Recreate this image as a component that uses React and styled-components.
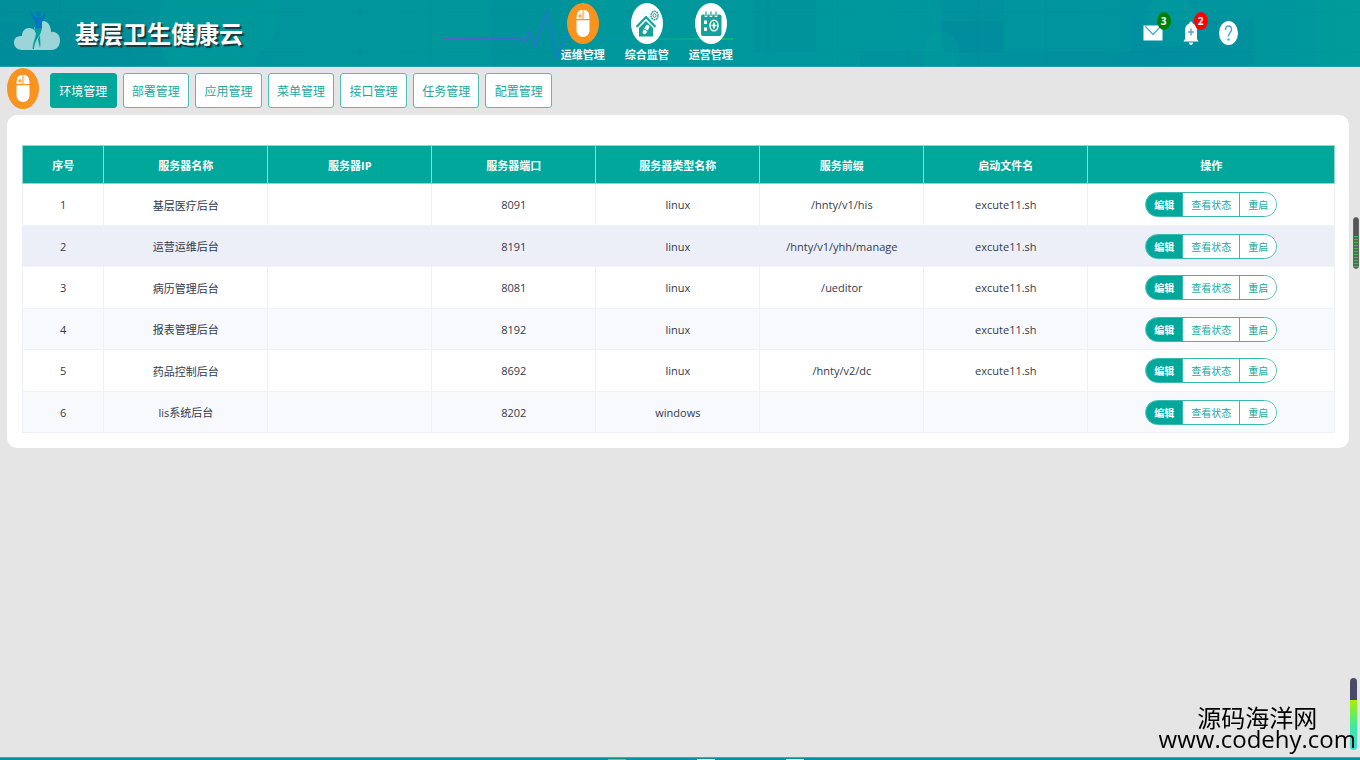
import { useState } from "react";
import styled, { createGlobalStyle } from "styled-components";

const GlobalStyles = createGlobalStyle`
  * {
    box-sizing: border-box;
  }

  body {
    margin: 0;
    background: #e5e5e5;
    color: #333a4d;
    font-family: "Open Sans", "Noto Sans CJK SC", sans-serif;
    font-size: 11px;
  }

  button {
    font-family: inherit;
    cursor: pointer;
  }
`;

const Page = styled.div`
  display: flex;
  flex-direction: column;
  min-height: 100vh;
`;

const Header = styled.header`
  position: relative;
  display: flex;
  height: 67px;
  background: linear-gradient(90deg, #00909b, #00989c 45%, #00979d 65%, #00939f 85%, #00989c);
  border-bottom: 1px solid #1f9fac;
`;

const HeaderPattern = styled.svg`
  position: absolute;
  inset: 0;
  width: 100%;
  height: 100%;
`;

const Brand = styled.div`
  position: relative;
  display: flex;
  gap: 14px;
  width: 40.5%;
  padding: 9px 0 0 13px;
`;

const Title = styled.h1`
  margin: 9px 0 0;
  color: #fff;
  font-size: 24px;
  font-weight: 700;
  line-height: 32px;
  text-shadow: 2px 2px 1px #17393c;
`;

const MainNav = styled.nav`
  position: relative;
  display: flex;
`;

const Pulse = styled.svg`
  position: absolute;
  top: 0;
  left: -107px;
`;

const NavItem = styled.a`
  position: relative;
  display: flex;
  flex-direction: column;
  align-items: center;
  width: 64px;
  padding-top: 3px;
  color: #fff;
  font-weight: 700;
  line-height: 22px;
  text-decoration: none;
`;

const Tools = styled.div`
  position: relative;
  display: flex;
  align-items: center;
  gap: 19px;
  margin-left: auto;
  padding-right: 9%;
`;

const Tool = styled.button`
  position: relative;
  display: flex;
  align-items: center;
  height: 24px;
  padding: 0;
  border: 0;
  background: none;
`;

const Badge = styled.span`
  position: absolute;
  top: -9px;
  right: -8px;
  width: 14px;
  height: 18px;
  border-radius: 50%;
  background: ${(props) => props.$color};
  color: #fff;
  font-size: 10px;
  font-weight: 700;
  line-height: 18px;
  text-align: center;
`;

const SubNav = styled.nav`
  display: flex;
  align-items: flex-start;
  height: 48px;
  padding: 1px 0 0 7px;
`;

const Tabs = styled.div`
  display: grid;
  grid-template-columns: repeat(7, 1fr);
  gap: 6px;
  width: 502px;
  margin: 5px 0 0 11px;
`;

const Tab = styled.button`
  height: 35px;
  padding: 0;
  border: 1px solid ${(props) => (props.$active ? "#00a89b" : "#4dbfb6")};
  border-radius: 3px;
  background: ${(props) => (props.$active ? "#00a89b" : "#fff")};
  color: ${(props) => (props.$active ? "#fff" : "#1ba99e")};
  font-size: 12px;
`;

const Card = styled.main`
  margin: 0 11px 0 7px;
  padding: 30px 14px 15px 15px;
  border-radius: 10px;
  background: #fff;
`;

const Table = styled.table`
  width: 100%;
  border-collapse: collapse;
  table-layout: fixed;
`;

const HeadCell = styled.th`
  width: ${(props) => props.$width};
  height: 38px;
  padding: 0;
  border: 1px solid #8fd8d2;
  background: #00a89b;
  color: #fff;
  font-weight: 700;
`;

const Row = styled.tr`
  height: 42px;
  background: ${(props) => (props.$highlighted ? "#eceff8" : "#fff")};

  &:nth-child(even) {
    height: 41px;
    background: ${(props) => (props.$highlighted ? "#eceff8" : "#f7f9fd")};
  }
`;

const Cell = styled.td`
  padding: 0;
  border: 1px solid #eef1f7;
  text-align: center;
`;

const Actions = styled.div`
  display: inline-flex;
  height: 25px;
  border: 1px solid #3cb9af;
  border-radius: 13px;
  overflow: hidden;
  vertical-align: middle;
`;

const Action = styled.button`
  padding: 0 8px;
  border: 0;
  border-left: ${(props) => (props.$primary ? "0" : "1px solid #3cb9af")};
  background: ${(props) => (props.$primary ? "#00a89b" : "#fff")};
  color: ${(props) => (props.$primary ? "#fff" : "#1ba99e")};
  font-size: 10px;
  font-weight: ${(props) => (props.$primary ? 700 : 400)};
`;

const Footer = styled.footer`
  display: flex;
  justify-content: center;
  gap: 71px;
  height: 3px;
  margin-top: auto;
  padding-left: 52px;
  border-top: 1px solid #3aa9b0;
  background: #00939c;
`;

const FooterDot = styled.span`
  width: 18px;
  height: 2px;
  border-radius: 50% 50% 0 0;
  background: linear-gradient(transparent 1px, ${(props) => props.$color} 1px);
`;

const SideMeter = styled.div`
  position: fixed;
  top: 217px;
  right: 1px;
  width: 6px;
  height: 52px;
  border: 1px solid #666;
  border-radius: 3px;
  background: linear-gradient(#555 18px, transparent 18px),
    repeating-linear-gradient(#35c450 0 1px, #4b704f 1px 3px);
`;

const BottomMeter = styled.div`
  position: fixed;
  right: 3px;
  bottom: 10px;
  width: 7px;
  height: 72px;
  border-radius: 4px;
  background: linear-gradient(#4b4a66 22px, #a8f000 22px, #3fe8a0 48px, #35e0d8);
`;

const Watermark = styled.div`
  position: fixed;
  right: 4px;
  bottom: 11px;
  color: #000;
  font-size: 24px;
  line-height: 21px;
  text-align: center;
`;

const columns = [
  { label: "序号", width: "6.2%" },
  { label: "服务器名称", width: "12.5%" },
  { label: "服务器IP", width: "12.5%" },
  { label: "服务器端口", width: "12.5%" },
  { label: "服务器类型名称", width: "12.5%" },
  { label: "服务前缀", width: "12.5%" },
  { label: "启动文件名", width: "12.5%" },
  { label: "操作", width: "18.8%" },
];

const servers = [
  { name: "基层医疗后台", port: "8091", type: "linux", prefix: "/hnty/v1/his", file: "excute11.sh" },
  { name: "运营运维后台", port: "8191", type: "linux", prefix: "/hnty/v1/yhh/manage", file: "excute11.sh" },
  { name: "病历管理后台", port: "8081", type: "linux", prefix: "/ueditor", file: "excute11.sh" },
  { name: "报表管理后台", port: "8192", type: "linux", prefix: "", file: "excute11.sh" },
  { name: "药品控制后台", port: "8692", type: "linux", prefix: "/hnty/v2/dc", file: "excute11.sh" },
  { name: "lis系统后台", port: "8202", type: "windows", prefix: "", file: "" },
];

const tabs = ["环境管理", "部署管理", "应用管理", "菜单管理", "接口管理", "任务管理", "配置管理"];

function Logo() {
  return (
    <svg width="48" height="42" viewBox="0 0 48 42" aria-hidden="true">
      <path
        d="M10 41C4 41 1 38 1 33.500C1 29 4 27 9 27C9 22 12 19 16 19C19 19 20 20 21 21C22 15 26 12 30 12C35 12 38 17 38 23C43 22 47 26 47 31C47 37 44 41 38 41Z"
        fill="#9bd5da"
      />
      <path d="M21 20L29 18C29 22 27 26 24 30C22 34 21 37 21 40L19.500 40C20 34 22 29 23 25Z" fill="#00a09a" />
      <path d="M27 26C27 32 28 36 27 39C26.500 36 25 33 25 30Z" fill="#00a09a" />
      <ellipse cx="25.500" cy="4.800" rx="2" ry="2.500" fill="#0874c4" />
      <path
        d="M17 0C19 5 22 8.500 25.500 8.500C29 8.500 31 6 33 2C32 8 29.500 11 29 14L29 19L22 20L22.500 13C19 9 17.500 5 17 0Z"
        fill="#0874c4"
      />
    </svg>
  );
}

function MouseIcon() {
  return (
    <svg width="32" height="41" viewBox="0 0 32 41" aria-hidden="true">
      <ellipse cx="16" cy="20.500" rx="16" ry="20.500" fill="#f7931e" />
      <path d="M9.500 16C9.500 10 11 7 15.500 6.700V16Z" fill="#fff" />
      <path d="M16.500 6.700C21 7 22.500 10 22.500 16H16.500Z" fill="#fff" />
      <path d="M9.500 17.300H22.500V27C22.500 31 20 34 16 34C12 34 9.500 31 9.500 27Z" fill="#fff" />
      <path d="M11 13H15M13 10.500V15.500" stroke="#f7931e" strokeWidth="1" />
    </svg>
  );
}

function HouseIcon() {
  return (
    <svg width="32" height="41" viewBox="0 0 32 41" aria-hidden="true">
      <ellipse cx="16" cy="20.500" rx="16" ry="20.500" fill="#fff" />
      <g fill="none" stroke="#12a49a">
        <path d="M5.500 24L15 14L24.500 24" strokeWidth="2.200" />
        <ellipse cx="23.500" cy="12.500" rx="3.500" ry="4.300" strokeWidth="1.300" strokeDasharray="2 0.500" />
        <ellipse cx="23.500" cy="12.500" rx="1.500" ry="2" />
      </g>
      <path d="M8 25L15 18L22 25V33.500H8Z" fill="#12a49a" />
      <rect x="13" y="21.500" width="4" height="10" rx="2" fill="#fff" transform="rotate(28 15 26.500)" />
      <path d="M13 26L17 28" stroke="#12a49a" />
    </svg>
  );
}

function CalendarIcon() {
  return (
    <svg width="32" height="41" viewBox="0 0 32 41" aria-hidden="true">
      <ellipse cx="16" cy="20.500" rx="16" ry="20.500" fill="#fff" />
      <rect x="6" y="11.500" width="20.500" height="21.500" rx="2" fill="#12a49a" />
      <path d="M11 9V14M16 9V14M21 9V14" stroke="#fff" strokeWidth="2.600" />
      <path d="M11 8.500V13M16 8.500V13M21 8.500V13" stroke="#12a49a" strokeWidth="1.200" />
      <path d="M9 17.500H12V21H9ZM9 24.500H12V28H9Z" fill="#fff" />
      <ellipse cx="19" cy="22.500" rx="4" ry="5.300" fill="none" stroke="#fff" strokeWidth="1.500" />
      <path d="M16.500 22.500H21.500M19 19.500V25.500" stroke="#fff" strokeWidth="1.600" />
    </svg>
  );
}

function Pattern() {
  return (
    <HeaderPattern viewBox="0 0 1360 66" preserveAspectRatio="none" aria-hidden="true">
      <g fill="#007aa0" opacity="0.120">
        <rect x="0" y="22" width="160" height="44" />
        <rect x="754" y="0" width="62" height="52" />
        <rect x="942" y="0" width="62" height="21" />
        <rect x="1130" y="20" width="124" height="46" />
        <rect x="490" y="0" width="90" height="66" />
        <rect x="860" y="52" width="270" height="14" />
      </g>
      <rect x="942" y="21" width="62" height="31" fill="#007aa0" opacity="0.300" />
      <g fill="#00a79c" opacity="0.220">
        <path d="M165 0H280C285 28 265 52 245 66H170C156 44 154 18 165 0Z" />
        <ellipse cx="941" cy="54" rx="18" ry="23" />
        <ellipse cx="1170" cy="18" rx="23" ry="29" />
        <rect x="1317" y="0" width="43" height="66" />
      </g>
      <path
        d="M0 12H1360M0 52H1360M60 0V66M130 0V66M360 0V66M430 0V66M768 0V66M838 0V66M908 0V66M978 0V66M1046 0V66"
        stroke="#007f93"
        opacity="0.120"
      />
    </HeaderPattern>
  );
}

function MainMenu() {
  return (
    <MainNav>
      <Pulse width="290" height="66" viewBox="0 0 290 66" aria-hidden="true">
        <defs>
          <linearGradient id="pulse" gradientUnits="userSpaceOnUse" x1="0" y1="0" x2="290" y2="0">
            <stop offset="0" stopColor="#5a5ccb" />
            <stop offset="0.300" stopColor="#2f70d0" />
            <stop offset="0.460" stopColor="#0088d0" />
            <stop offset="0.700" stopColor="#00a590" />
            <stop offset="1" stopColor="#00c862" />
          </linearGradient>
        </defs>
        <path
          d="M0 38.500H77L80 42L85 32L91 46L103 12L113 57L124 32L130 39H289"
          fill="none"
          stroke="url(#pulse)"
          strokeWidth="1.600"
        />
      </Pulse>
      <NavItem href="#ops">
        <MouseIcon />
        运维管理
      </NavItem>
      <NavItem href="#supervise">
        <HouseIcon />
        综合监管
      </NavItem>
      <NavItem href="#business">
        <CalendarIcon />
        运营管理
      </NavItem>
    </MainNav>
  );
}

function HeaderTools() {
  return (
    <Tools>
      <Tool aria-label="消息">
        <svg width="20" height="16" viewBox="0 0 20 16" aria-hidden="true">
          <rect x="0.500" y="0.500" width="19" height="15" fill="#fff" />
          <path d="M2 1L10 9.500L18 1" fill="none" stroke="#4ba9dc" strokeWidth="1.200" />
        </svg>
        <Badge $color="#008000">3</Badge>
      </Tool>
      <Tool aria-label="通知">
        <svg width="18" height="24" viewBox="0 0 18 24" aria-hidden="true">
          <path
            d="M9 0.500C10 0.500 10.500 1.300 10.500 2.300C13.500 3.500 15 6 15 10V18L16.500 20.500H1.500L3 18V10C3 6 4.500 3.500 7.500 2.300C7.500 1.300 8 0.500 9 0.500Z"
            fill="#fff"
          />
          <path d="M7 21.500H11C11 23 10 24 9 24C8 24 7 23 7 21.500Z" fill="#fff" />
          <path d="M6 11H12M9 7.500V14.500" stroke="#4ba9dc" strokeWidth="1.400" />
        </svg>
        <Badge $color="#ff0000">2</Badge>
      </Tool>
      <Tool aria-label="帮助">
        <svg width="19" height="24" viewBox="0 0 19 24" aria-hidden="true">
          <ellipse cx="9.500" cy="12" rx="9.500" ry="12" fill="#fff" />
          <path
            d="M6.500 9C6.500 6.500 7.500 5 9.500 5C11.500 5 12.500 6.500 12.500 8.500C12.500 11.500 9.500 11.500 9.500 15.500"
            fill="none"
            stroke="#4ba9dc"
            strokeWidth="1.500"
          />
          <circle cx="9.500" cy="18.500" r="1.200" fill="#4ba9dc" />
        </svg>
      </Tool>
    </Tools>
  );
}

export default function App() {
  const [active, setActive] = useState(0);

  return (
    <Page>
      <GlobalStyles />
      <Header>
        <Pattern />
        <Brand>
          <Logo />
          <Title>基层卫生健康云</Title>
        </Brand>
        <MainMenu />
        <HeaderTools />
      </Header>

      <SubNav>
        <MouseIcon />
        <Tabs>
          {tabs.map((tab, index) => (
            <Tab key={tab} $active={index === active} onClick={() => setActive(index)}>
              {tab}
            </Tab>
          ))}
        </Tabs>
      </SubNav>

      <Card>
        <Table>
          <thead>
            <tr>
              {columns.map((column) => (
                <HeadCell key={column.label} $width={column.width}>
                  {column.label}
                </HeadCell>
              ))}
            </tr>
          </thead>
          <tbody>
            {servers.map((server, index) => (
              <Row key={server.name} $highlighted={index === 1}>
                <Cell>{index + 1}</Cell>
                <Cell>{server.name}</Cell>
                <Cell />
                <Cell>{server.port}</Cell>
                <Cell>{server.type}</Cell>
                <Cell>{server.prefix}</Cell>
                <Cell>{server.file}</Cell>
                <Cell>
                  <Actions>
                    <Action $primary>编辑</Action>
                    <Action>查看状态</Action>
                    <Action>重启</Action>
                  </Actions>
                </Cell>
              </Row>
            ))}
          </tbody>
        </Table>
      </Card>

      <SideMeter />
      <BottomMeter />
      <Watermark>
        <div>源码海洋网</div>
        <div>www.codehy.com</div>
      </Watermark>
      <Footer>
        <FooterDot $color="#c9a24a" />
        <FooterDot $color="#d8f2f0" />
        <FooterDot $color="#d8f2f0" />
      </Footer>
    </Page>
  );
}
